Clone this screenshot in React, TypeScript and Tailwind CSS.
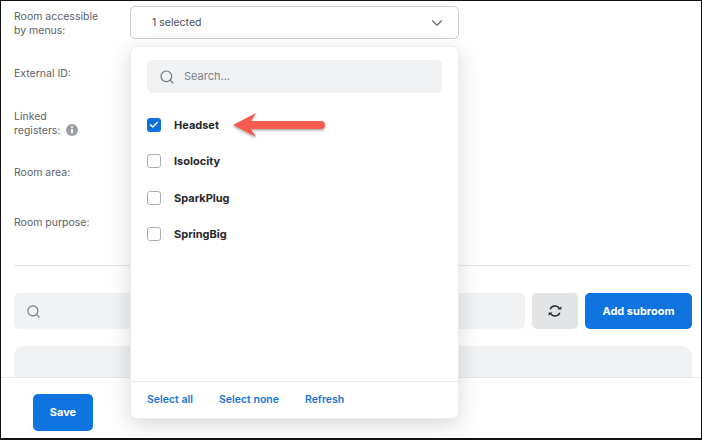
import React from "react";
import { Search, ChevronDown, Check } from "lucide-react";

function Field({ label, h }: { label: React.ReactNode; h: string }) {
  return <div className={`${h} text-[10.5px] leading-[14px] text-[#5b5f66]`}>{label}</div>;
}

function Option({ label, checked }: { label: string; checked?: boolean }) {
  return (
    <div className="flex h-[36.5px] items-center gap-[13px]">
      {checked ? (
        <span className="flex h-[14px] w-[14px] items-center justify-center rounded-[3px] bg-[#0f6fdc]">
          <Check className="h-[10px] w-[10px] text-white" strokeWidth={3.5} />
        </span>
      ) : (
        <span className="h-[14px] w-[14px] rounded-[3px] border border-[#a9adb3] bg-white" />
      )}
      <span className="text-[11px] font-bold text-[#26282c]">{label}</span>
    </div>
  );
}

export default function App() {
  return (
    <div className="relative h-[440px] w-[702px] overflow-hidden border-t border-r border-l border-b-2 border-[#111] bg-white font-['Inter',sans-serif]">
      <div className="flex h-[376px] flex-col pl-[13px] pr-[9px]">
        <div className="flex shrink-0 pt-[5px]">
          <div className="w-[116px] pt-[4px]">
            <Field h="h-[57px]" label={<>Room accessible<br />by menus:</>} />
            <Field h="h-[43px]" label="External ID:" />
            <div className="h-[56px]">
              <div className="flex flex-col text-[10.5px] leading-[13.5px] text-[#5b5f66]">
                <span>Linked</span>
                <span className="flex items-center gap-[6px]">
                  registers:
                  <svg viewBox="0 0 12 12" className="h-[12px] w-[12px]">
                    <circle cx="6" cy="6" r="6" fill="#9a9ea4" />
                    <rect x="5.1" y="5" width="1.8" height="4.4" fill="#fff" />
                    <circle cx="6" cy="3.3" r="1.05" fill="#fff" />
                  </svg>
                </span>
              </div>
            </div>
            <Field h="h-[50px]" label="Room area:" />
            <Field h="h-[30px]" label="Room purpose:" />
          </div>
          <div className="flex h-[33px] w-[329px] items-center justify-between rounded-[5px] border border-[#c9cbcf] bg-white pl-[21px] pr-[12px]">
            <span className="text-[10.5px] text-[#4a4d52]">1 selected</span>
            <ChevronDown className="h-[18px] w-[18px] text-[#6f7278]" strokeWidth={1.75} />
          </div>
        </div>
        <div className="mt-[19px] shrink-0 border-t border-[#e6e7e9]" />
        <div className="mt-[27px] flex h-[36px] shrink-0 gap-[7px]">
          <div className="flex flex-1 items-center rounded-[5px] bg-[#f1f2f4] pl-[12px]">
            <Search className="h-[15px] w-[15px] text-[#6f7278]" strokeWidth={1.75} />
          </div>
          <div className="flex w-[46px] items-center justify-center rounded-[5px] bg-[#e2e4e6]">
            <svg viewBox="0 0 14 14" className="h-[14px] w-[14px]" fill="none">
              <path d="M2.2 5.2 A5.1 5.1 0 0 1 11.4 4.6" stroke="#26282c" strokeWidth="1.5" />
              <path d="M11.8 8.8 A5.1 5.1 0 0 1 2.6 9.4" stroke="#26282c" strokeWidth="1.5" />
              <path d="M9.6 5.6 L13.4 5.6 L13.4 2.2 Z" fill="#26282c" />
              <path d="M4.4 8.4 L0.6 8.4 L0.6 11.8 Z" fill="#26282c" />
            </svg>
          </div>
          <div className="flex w-[107px] items-center justify-center rounded-[5px] bg-[#0f73e0] text-[11px] font-bold text-white">
            Add subroom
          </div>
        </div>
        <div className="mt-[17px] h-[40px] shrink-0 rounded-t-[10px] bg-[#f1f2f4]" />
      </div>
      <div className="relative z-0 h-[62px] border-t border-[#e6e7e9] bg-white pl-[32px] pt-[16px]">
        <div className="flex h-[37px] w-[60px] items-center justify-center rounded-[5px] bg-[#0f73e0] text-[11px] font-bold text-white">
          Save
        </div>
      </div>

      <div className="absolute left-[129px] top-[45px] flex h-[373px] w-[329px] flex-col rounded-[7px] border border-[#eceded] bg-white shadow-[0_6px_22px_rgba(0,0,0,0.16)]">
        <div className="flex-1 px-[16px] pt-[13px]">
          <div className="flex h-[33px] items-center gap-[9px] rounded-[5px] bg-[#f1f2f4] pl-[12px]">
            <Search className="h-[16px] w-[16px] text-[#6f7278]" strokeWidth={1.75} />
            <span className="text-[11px] text-[#7b7e84]">Search...</span>
          </div>
          <div className="mt-[13.5px]">
            <Option label="Headset" checked />
            <Option label="Isolocity" />
            <Option label="SparkPlug" />
            <Option label="SpringBig" />
          </div>
        </div>
        <div className="flex h-[37px] items-center gap-[26px] border-t border-[#e6e7e9] pl-[16px] text-[10.5px] font-semibold text-[#1a73d4]">
          <span>Select all</span>
          <span>Select none</span>
          <span>Refresh</span>
        </div>
      </div>

      <svg className="absolute left-[227px] top-[108px]" width="104" height="36" viewBox="0 0 104 36">
        <defs>
          <filter id="s" x="-10%" y="-30%" width="120%" height="170%">
            <feDropShadow dx="0" dy="1.5" stdDeviation="1.2" floodColor="#000" floodOpacity="0.35" />
          </filter>
        </defs>
        <path d="M5 16 L28 4 L23 12 L93 12 Q97 12 97 16 Q97 20 93 20 L23 20 L28 28 Z" fill="#f45b50" filter="url(#s)" />
      </svg>
    </div>
  );
}
